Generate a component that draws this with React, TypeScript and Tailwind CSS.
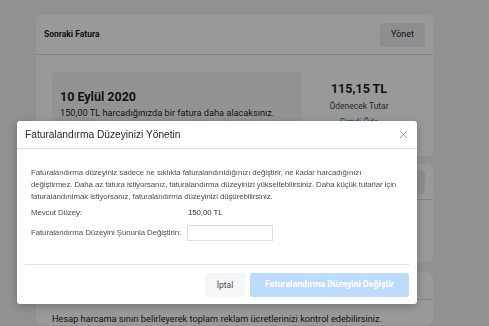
import { X } from 'lucide-react';

export default function App() {
  return (
    <div className="relative h-screen w-full overflow-hidden bg-[#f0f2f5] font-['Roboto',sans-serif] text-[#1c1e21]">
      {/* page behind the dialog */}
      <div className="flex flex-col gap-2 pl-[36px] pt-[15px] w-[433px]">
        <div className="bg-white rounded-md">
          <div className="flex items-center justify-between h-[40px] px-2 border-b border-[#dadde1]">
            <span className="text-[8.5px] font-bold">Sonraki Fatura</span>
            <button className="h-[24px] w-[45px] rounded bg-[#ebedf0] text-[9px]">Yönet</button>
          </div>
          <div className="flex px-4 pt-[17px] pb-[18px]">
            <div className="w-[249px] h-[66px] bg-[#f5f6f7] rounded-sm px-2 pt-[16px]">
              <div className="text-[12.5px] font-bold leading-[17px]">10 Eylül 2020</div>
              <div className="text-[9.2px] leading-[13px] mt-[1px]">150,00 TL harcadığınızda bir fatura daha alacaksınız.</div>
            </div>
            <div className="flex-1 flex flex-col items-center pt-[9px]">
              <div className="text-[12.5px] font-bold leading-[16px]">115,15 TL</div>
              <div className="text-[8.5px] leading-[12px] mt-[3px] text-[#444950]">Ödenecek Tutar</div>
              <div className="text-[8.5px] leading-[12px] mt-[4px] text-[#216fdb]">Şimdi Öde</div>
            </div>
          </div>
        </div>
        <div className="bg-white rounded-md h-[98px]">
          <div className="flex items-center justify-end h-[36px] px-2 border-b border-[#dadde1]">
            <div className="h-[24px] w-[60px] rounded bg-[#ebedf0]" />
          </div>
        </div>
        <div className="bg-white rounded-md mt-[2px]">
          <div className="h-[28px] border-b border-[#dadde1]" />
          <div className="px-4 pt-[12px] text-[9.2px] leading-[13px]">
            Hesap harcama sınırı belirleyerek toplam reklam ücretlerinizi kontrol edebilirsiniz.
          </div>
        </div>
      </div>

      {/* dialog overlay */}
      <div className="fixed inset-0 bg-black/40 pl-[17px] pt-[121px]">
        <div className="w-[400px] h-[183px] bg-white rounded-[3px] shadow-[0_2px_10px_rgba(0,0,0,0.25)] flex flex-col font-['Liberation_Sans',Arial,sans-serif]">
          <div className="flex items-center justify-between h-[28px] pl-2 pr-[7px] border-b border-[#dddfe2]">
            <span className="text-[10.2px] text-[#1d2129]">Faturalandırma Düzeyinizi Yönetin</span>
            <X className="w-[13px] h-[13px] text-[#8a8d91]" strokeWidth={1.5} />
          </div>
          <div className="px-[14px] pt-[18px] text-[7.9px] leading-[12px] text-[#4b4f56] tracking-[-0.1px]">
            <p>
              Faturalandırma düzeyiniz sadece ne sıklıkta faturalandırıldığınızı değiştirir, ne kadar harcadığınızı
              <br />
              değiştirmez. Daha az fatura istiyorsanız, faturalandırma düzeyinizi yükseltebilirsiniz. Daha küçük tutarlar için
              <br />
              faturalandırılmak istiyorsanız, faturalandırma düzeyinizi düşürebilirsiniz.
            </p>
            <div className="flex mt-[4px] h-[12px] items-center">
              <span className="w-[157px]">Mevcut Düzey:</span>
              <span className="text-[#1d2129]">150,00 TL</span>
            </div>
            <div className="flex mt-[6px] items-center">
              <span className="w-[156px]">Faturalandırma Düzeyini Şununla Değiştirin:</span>
              <input className="w-[86px] h-[16px] border border-[#dddfe2] outline-none" />
            </div>
          </div>
          <div className="mt-auto mx-2 border-t border-[#dddfe2] flex justify-end gap-[5px] pt-[8px] pb-[7px]">
            <button className="h-[24px] w-[40px] rounded-[3px] bg-[#f5f6f7] text-[8.5px] text-[#4b4f56] font-['Roboto',sans-serif]">İptal</button>
            <button className="h-[24px] w-[159px] rounded-[3px] bg-[#bcdcfe] text-[8.8px] font-bold text-white font-['Roboto',sans-serif]">Faturalandırma Düzeyini Değiştir</button>
          </div>
        </div>
      </div>
    </div>
  );
}
